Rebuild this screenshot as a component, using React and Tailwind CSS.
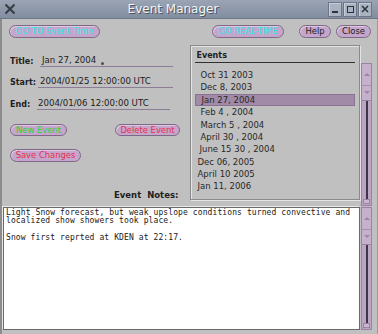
import React from 'react';

const events = [
  { label: 'Oct 31 2003', pad: 'pl-[6px]' },
  { label: 'Dec 8, 2003', pad: 'pl-[6px]' },
  { label: 'Jan 27, 2004', pad: 'pl-[6px]', selected: true },
  { label: 'Feb 4 , 2004', pad: 'pl-[6px]' },
  { label: 'March 5 , 2004', pad: 'pl-[6px]' },
  { label: 'April 30 , 2004', pad: 'pl-[6px]' },
  { label: 'June 15 30 , 2004', pad: 'pl-[5px]' },
  { label: 'Dec 06, 2005', pad: 'pl-[3px]' },
  { label: 'April 10 2005', pad: 'pl-[3px]' },
  { label: 'Jan 11, 2006', pad: 'pl-[3px]' },
];

const notes = `Light Snow forecast, but weak upslope conditions turned convective and
localized show showers took place.

Snow first reprted at KDEN at 22:17.`;

const Pill = ({ children, className }) => (
  <div
    className={`h-[12.5px] rounded-full border border-[#7e6886] bg-[#c4a6cc] shadow-[inset_1px_1px_0_#dcc8e2] flex items-center justify-center text-[8.4px] leading-none whitespace-nowrap ${className}`}
  >
    {children}
  </div>
);

const Field = ({ label, value, labelW, fieldW, pad, caret }) => (
  <div className="flex items-end h-[12px]">
    <div className="font-bold text-[8px] leading-[10px] text-[#202020]" style={{ width: labelW }}>
      {label}
    </div>
    <div
      className={`relative h-[12px] border-b border-[#8c7c98] text-[8.6px] leading-[10px] text-[#202020] ${pad}`}
      style={{ width: fieldW }}
    >
      {value}
      {caret && <span className="absolute left-[61px] bottom-[1px] w-[3px] h-[3px] rounded-full bg-[#505050]" />}
    </div>
  </div>
);

const ScrollBar = ({ className }) => (
  <div className={`w-[11px] flex flex-col bg-[#bca4c4] border border-[#9a82a2] ${className}`}>
    <div className="h-[22px] border-b border-[#a890b0] bg-[#c6b0cc] flex items-center justify-center">
      <div className="w-0 h-0 border-l-[3px] border-r-[3px] border-b-[3px] border-l-transparent border-r-transparent border-b-[#9a88a0]" />
    </div>
    <div className="h-[15px] border-b border-[#9a82a2] bg-[#c6b0cc] flex items-center justify-center">
      <div className="w-0 h-0 border-l-[3px] border-r-[3px] border-t-[3px] border-l-transparent border-r-transparent border-t-[#9a88a0]" />
    </div>
    <div className="flex-1 flex justify-center">
      <div className="w-[2px] bg-[#3e3646]" />
    </div>
    <div className="h-[5px] mx-[1px] mb-[1px] border border-[#9a82a2] bg-[#ccb6d2]" />
  </div>
);

export default function App() {
  return (
    <div
      className="w-[378px] h-[334px] overflow-hidden bg-[#c0c0c0] flex flex-col"
      style={{ fontFamily: '"DejaVu Sans", sans-serif' }}
    >
      {/* title bar */}
      <div className="h-[19px] shrink-0 relative flex items-center bg-gradient-to-b from-[#9aa4b4] to-[#828da0] border-b border-[#6c7686]">
        <svg width="12" height="12" viewBox="0 0 12 12" className="ml-[4px]">
          <path d="M1.5 1.5 L10.5 10.5 M10.5 1.5 L1.5 10.5" stroke="#3a3f48" strokeWidth="2.2" />
        </svg>
        <div
          className="flex-1 text-center text-[12px] leading-none text-[#f4f4f4] pl-[2px]"
          style={{ textShadow: '1px 1px 0 #4a5260' }}
        >
          Event Manager
        </div>
        <div className="flex mr-[6px] gap-[1px]">
          {['min', 'max', 'close'].map((k) => (
            <div
              key={k}
              className="w-[14px] h-[15px] border border-[#6c7686] bg-[#a9b2c0] shadow-[inset_1px_1px_0_#c8ced8] flex items-center justify-center"
            >
              {k === 'min' && <div className="w-[6px] h-[2px] bg-[#2e323a] mt-[5px]" />}
              {k === 'max' && <div className="w-[7px] h-[7px] border-[1.5px] border-[#2e323a]" />}
              {k === 'close' && (
                <svg width="8" height="8" viewBox="0 0 8 8">
                  <path d="M1 1 L7 7 M7 1 L1 7" stroke="#2e323a" strokeWidth="1.5" />
                </svg>
              )}
            </div>
          ))}
        </div>
      </div>

      {/* body */}
      <div className="flex-1 flex flex-col border-l-[2px] border-[#8c8c8c] pl-[1px] pr-[5px] border-r border-r-[#9a9a9a]">
        <div className="flex items-center mt-[6px] h-[12.5px]">
          <Pill className="w-[91px] ml-[6px] text-[#30eaea]">GO TO Event Time</Pill>
          <Pill className="w-[72px] ml-[112px] text-[#30eaea]">GO REAL-TIME</Pill>
          <Pill className="w-[32px] ml-[15px] text-[#202020]">Help</Pill>
          <Pill className="w-[35px] ml-[5px] text-[#202020]">Close</Pill>
        </div>

        <div className="flex mt-[6px] h-[162px]">
          {/* left column */}
          <div className="w-[187px] pl-[7px] flex flex-col">
            <div className="mt-[11px]">
              <Field label="Title:" value="Jan 27, 2004" labelW={30} fieldW={133} pad="pl-[2px]" caret />
            </div>
            <div className="mt-[9px]">
              <Field label="Start:" value="2004/01/25 12:00:00 UTC" labelW={28} fieldW={135} pad="pl-[2px]" />
            </div>
            <div className="mt-[10px]">
              <Field label="End:" value="2004/01/06 12:00:00 UTC" labelW={27} fieldW={133} pad="pl-[1px]" />
            </div>
            <div className="flex mt-[14px]">
              <Pill className="w-[57px] text-[#2ed42e]">New Event</Pill>
              <Pill className="w-[65px] ml-[48px] text-[#e8304a]">Delete Event</Pill>
            </div>
            <div className="flex mt-[13px]">
              <Pill className="w-[71px] text-[#e8304a]">Save Changes</Pill>
            </div>
            <div className="mt-[28px] pl-[104px] font-bold text-[8.5px] leading-[10px] text-[#202020] whitespace-pre">
              Event  Notes:
            </div>
          </div>

          {/* events panel */}
          <div className="w-[171px] h-[155px] mt-[1px] border border-[#8a8a8a] shadow-[inset_1px_1px_0_#e4e4e4,1px_1px_0_#e4e4e4] flex flex-col">
            <div className="pt-[5px] pl-[6px] font-bold text-[8px] leading-[10px] text-[#202020]">Events</div>
            <div className="mx-[4px] mt-[1.5px] h-[1px] bg-[#303030]" />
            <div className="mx-[4px] mt-[6px] flex flex-col">
              {events.map((e) => (
                <div
                  key={e.label}
                  className={`h-[12.4px] flex items-center text-[8.5px] leading-none text-[#282828] ${e.pad} ${
                    e.selected ? 'bg-[#a08aa8] border border-[#8a7292]' : ''
                  }`}
                >
                  {e.label}
                </div>
              ))}
            </div>
          </div>
          <ScrollBar className="ml-[1px] mt-[19px] h-[143px]" />
        </div>

        {/* notes */}
        <div className="flex mt-[1px] h-[123px]">
          <div
            className="flex-1 bg-white border border-[#6a6a6a] shadow-[-1px_-1px_0_#e8e8e8] pl-[2px] pt-[1px] text-[8px] leading-[8.6px] tracking-[0.1px] text-[#202020] whitespace-pre"
            style={{ fontFamily: '"DejaVu Sans Mono", monospace' }}
          >
            {notes}
          </div>
          <ScrollBar className="ml-[1px] h-[123px]" />
        </div>
      </div>
    </div>
  );
}
